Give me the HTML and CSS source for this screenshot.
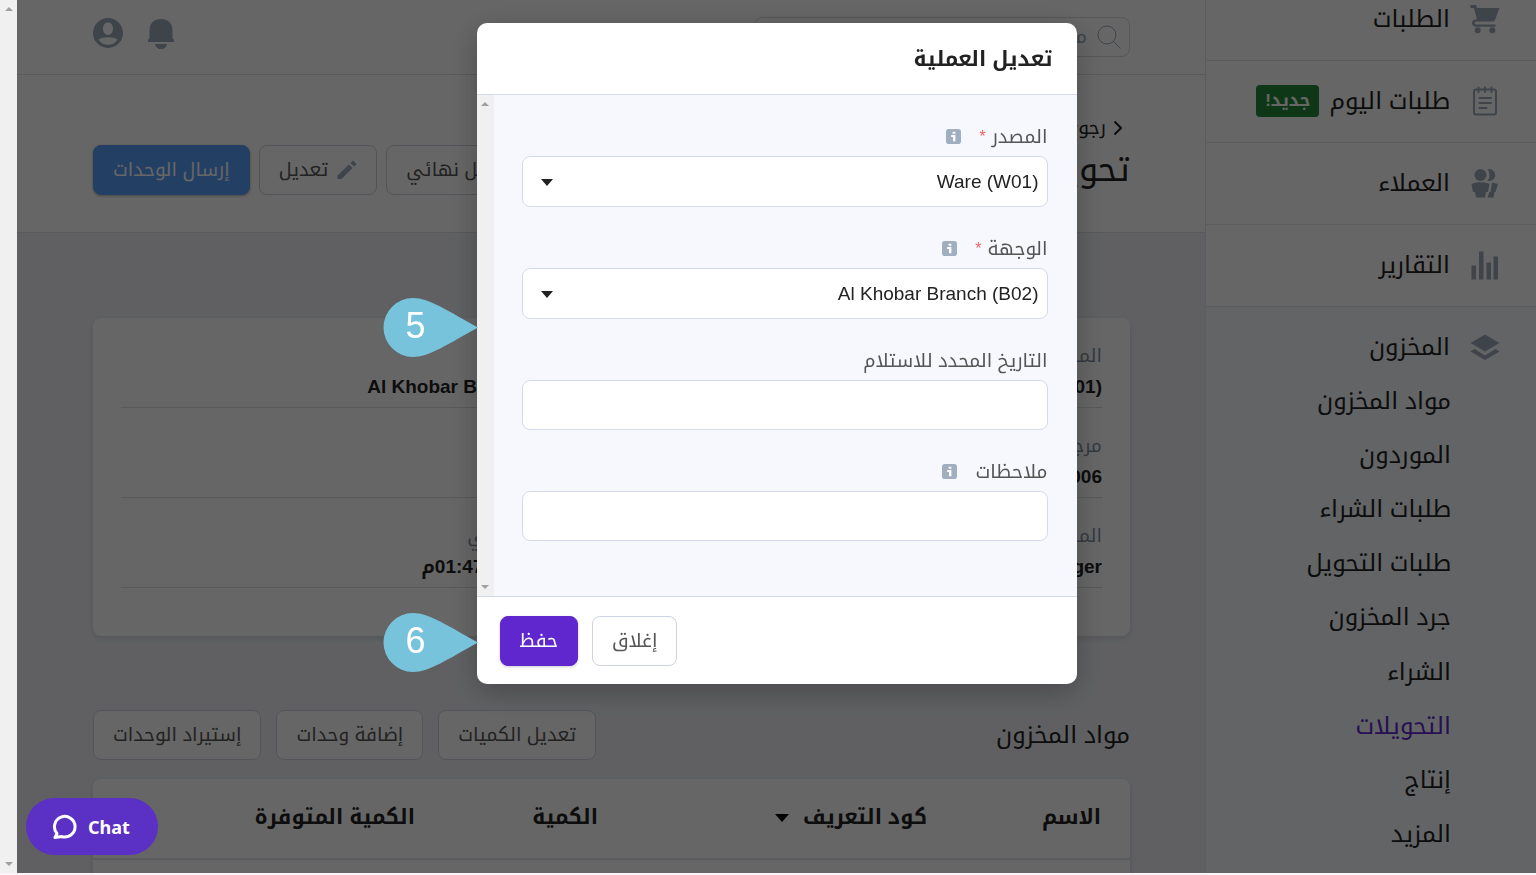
FILE: index.html
```html
<!DOCTYPE html>
<html lang="ar" dir="rtl">
<head>
<meta charset="utf-8">
<title>تعديل العملية</title>
<link rel="stylesheet" href="styles.css">
</head>
<body>
<div class="app">
  <nav class="sidebar">
    <a class="nav-item nav-first" href="#">
      <svg class="nav-icon" viewBox="0 0 30 30"><path d="M0.500 1H6l1.200 3H29.500L25 16a2.500 2.500 0 0 1-2.400 1.500H6.500c-2.600 0-2.600 3 0 3H25.500v2.300H6.500C1 22.800.5 16.500 5.200 15.500L7 15 3.800 4H.5z"/><circle cx="7.700" cy="26.300" r="3"/><circle cx="22.300" cy="26.300" r="3"/></svg>
      <span>الطلبات</span>
    </a>
    <a class="nav-item" href="#">
      <svg class="nav-icon line" viewBox="0 0 30 30"><rect x="4" y="3.500" width="22" height="25" rx="2"/><path d="M8.500 1.500v4.500M15 1.500v4.500M21.500 1.500v4.500M9.500 12h11.500M9.500 17h11.500M9.500 22h7"/></svg>
      <span>طلبات اليوم</span><span class="badge">جديد!</span>
    </a>
    <a class="nav-item" href="#">
      <svg class="nav-icon" viewBox="0 0 30 30"><circle cx="10.500" cy="7" r="6"/><path d="M17.500 1.300a6 6 0 1 1 0 11.400c2.600-3.400 2.600-8 0-11.400zM1.500 16C6 13.500 15 13.500 19.500 16L18 24h-2l-1 5.500H6L5 24H3zM22 14.500l6 1.500L25.500 24h-1L23.500 29.500h-6L19.500 24h1z"/></svg>
      <span>العملاء</span>
    </a>
    <a class="nav-item" href="#">
      <svg class="nav-icon" viewBox="0 0 30 30"><path d="M1.500 15.500H6v14H1.500zM9 1.500h4.500v28H9zM16.500 12.500H21v17h-4.500zM23.500 6.500H28v23h-4.500z"/></svg>
      <span>التقارير</span>
    </a>
    <div class="nav-group">
      <a class="nav-item nav-open" href="#">
        <svg class="nav-icon" viewBox="0 0 30 30"><path d="M15 2.500L29.500 11 15 19.500.5 11zM.5 19.500L4.500 17 15 23.500 25.500 17l4 2.500L15 28z"/></svg>
        <span>المخزون</span>
      </a>
      <div class="subnav">
        <a href="#">مواد المخزون</a>
        <a href="#">الموردون</a>
        <a href="#">طلبات الشراء</a>
        <a href="#">طلبات التحويل</a>
        <a href="#">جرد المخزون</a>
        <a href="#">الشراء</a>
        <a class="active" href="#">التحويلات</a>
        <a href="#">إنتاج</a>
        <a href="#">المزيد</a>
      </div>
    </div>
  </nav>

  <main class="main">
    <header class="topbar">
      <label class="search">
        <svg viewBox="0 0 24 24"><circle cx="10" cy="10" r="9"/><path d="M16.500 16.500l7 7"/></svg>
        <input type="search" placeholder="مكان البحث" aria-label="بحث">
      </label>
      <div class="top-icons">
        <svg class="bell" viewBox="0 0 28 32"><path d="M14 2C7 2 2.500 6.500 2.500 13v8L1 23v2h26v-2l-1.500-2v-8C25.500 6.500 21 2 14 2zM8 27h12c-1 7-11 7-12 0z"/></svg>
        <svg class="user" viewBox="0 0 30 30"><path fill-rule="evenodd" d="M15 0a15 15 0 1 0 0 30 15 15 0 0 0 0-30zM15 4.500c3 0 5 2.500 5 6s-2 6.500-5 6.500-5-3-5-6.500 2-6 5-6zM5.500 21.500c5-3 14-3 19 0-4 7-15 7-19 0z"/></svg>
      </div>
    </header>

    <section class="page-head">
      <div class="page-title">
        <a class="back" href="#"><svg viewBox="0 0 10 16"><path d="M1.500 1.500L8 8l-6.500 6.500"/></svg>رجوع</a>
        <h1>تحويل</h1>
      </div>
      <div class="actions">
        <button class="btn">حذف بشكل نهائي</button>
        <button class="btn"><svg viewBox="0 0 20 20"><path d="M.5 15.500L12 4.500l3.500 3.500L4.500 19H.5zM13.500 3L16 .5 19.500 4 17 6.500z"/></svg>تعديل</button>
        <button class="btn btn-blue">إرسال الوحدات</button>
      </div>
    </section>

    <div class="content">
      <dl class="card details">
        <div><dt>المصدر</dt><dd>Ware (W01)</dd></div>
        <div><dt>الوجهة</dt><dd>Al Khobar Branch (B02)</dd></div>
        <div><dt>مرجع</dt><dd>00006</dd></div>
        <div><dt>ملاحظات</dt><dd>-</dd></div>
        <div><dt>المنشئ</dt><dd>Manager</dd></div>
        <div><dt>التاريخ الفعلي</dt><dd><bdi>2022-5-17</bdi>، <bdi>01:47م</bdi></dd></div>
      </dl>

      <div class="section-head">
        <h2>مواد المخزون</h2>
        <div class="section-actions">
          <button class="btn">تعديل الكميات</button>
          <button class="btn">إضافة وحدات</button>
          <button class="btn">إستيراد الوحدات</button>
        </div>
      </div>

      <div class="card table-card">
        <table>
          <thead>
            <tr><th class="c-name">الاسم</th><th class="c-code">كود التعريف <svg viewBox="0 0 14 8"><path d="M0 0h14L7 8z"/></svg></th><th class="c-qty">الكمية</th><th>الكمية المتوفرة</th></tr>
          </thead>
        </table>
      </div>
    </div>
  </main>

  <div class="scrollbar" aria-hidden="true">
    <svg viewBox="0 0 8 4"><path d="M0 4h8L4 0z"/></svg>
    <svg viewBox="0 0 8 4"><path d="M0 0h8L4 4z"/></svg>
  </div>
</div>

<div class="overlay">
  <form class="modal" role="dialog" aria-labelledby="modal-title">
    <h3 class="modal-head" id="modal-title">تعديل العملية</h3>
    <div class="modal-body">
      <div class="fields">
        <div class="field">
          <label for="source">المصدر <span class="req">*</span><svg class="info" viewBox="0 0 16 16"><rect width="16" height="16" rx="3"/><path d="M7 3h3v2H7zM5.500 6.500H10V13H7.500V8.500h-2z"/></svg></label>
          <div class="select"><select id="source"><option>Ware (W01)</option></select><svg viewBox="0 0 12 7"><path d="M0 0h12L6 7z"/></svg></div>
        </div>
        <div class="field">
          <label for="dest">الوجهة <span class="req">*</span><svg class="info" viewBox="0 0 16 16"><rect width="16" height="16" rx="3"/><path d="M7 3h3v2H7zM5.500 6.500H10V13H7.500V8.500h-2z"/></svg></label>
          <div class="select"><select id="dest"><option>Al Khobar Branch (B02)</option></select><svg viewBox="0 0 12 7"><path d="M0 0h12L6 7z"/></svg></div>
        </div>
        <div class="field">
          <label for="date">التاريخ المحدد للاستلام</label>
          <input id="date" type="text">
        </div>
        <div class="field">
          <label for="notes">ملاحظات<svg class="info" viewBox="0 0 16 16"><rect width="16" height="16" rx="3"/><path d="M7 3h3v2H7zM5.500 6.500H10V13H7.500V8.500h-2z"/></svg></label>
          <input id="notes" type="text">
        </div>
      </div>
      <div class="scrollbar" aria-hidden="true">
        <svg viewBox="0 0 8 4"><path d="M0 4h8L4 0z"/></svg>
        <svg viewBox="0 0 8 4"><path d="M0 0h8L4 4z"/></svg>
      </div>
    </div>
    <div class="modal-foot">
      <button type="button" class="btn">إغلاق</button>
      <button type="button" class="btn btn-purple">حفظ</button>
    </div>
    <div class="pin pin-five"><svg viewBox="0 0 95 60"><path d="M30 0C46 0 65 13 95 29.500 65 46 46 59 30 59A29.500 29.500 0 0 1 30 0z"/></svg><span>5</span></div>
    <div class="pin pin-six"><svg viewBox="0 0 95 60"><path d="M30 0C46 0 65 13 95 29.500 65 46 46 59 30 59A29.500 29.500 0 0 1 30 0z"/></svg><span>6</span></div>
  </form>
</div>

<button class="chat" dir="ltr"><svg viewBox="0 0 26 26"><path d="M5 19.500A10.300 10.300 0 1 1 9.500 22.500L3 23.500z"/></svg>Chat</button>
</body>
</html>
```
FILE: styles.css
```css
* { box-sizing: border-box; }

body {
  margin: 0;
  height: 100vh;
  overflow: hidden;
  background: #fbf4f8;
  color: #222;
  font-family: "Liberation Sans", "Noto Kufi Arabic", "Noto Sans Arabic", "DejaVu Sans", sans-serif;
  font-size: 19px;
}

a { color: inherit; text-decoration: none; }
h1, h2, h3, dl, dd { margin: 0; font-weight: 400; }
button, input, select { font: inherit; }

.app {
  display: flex;
  height: calc(100vh - 2px);
  overflow: hidden;
}

/* Sidebar */
.sidebar {
  flex: 0 0 331px;
  display: flex;
  flex-direction: column;
  border-left: 1px solid #e4e6ee;
  background: #fff;
  font-size: 24px;
}
.nav-item {
  display: flex;
  align-items: center;
  flex: 0 0 82px;
  height: 82px;
  padding: 0 36px 2px 0;
  border-bottom: 1px solid #e4e6ee;
}
.nav-first { margin-top: -21px; }
.nav-icon {
  width: 30px;
  height: 30px;
  margin-left: 20px;
  fill: #9ea9ba;
}
.nav-icon.line { fill: none; stroke: #9ea9ba; stroke-width: 2; stroke-linecap: round; }
.badge {
  margin-right: 10px;
  padding: 0 9px;
  border-radius: 4px;
  background: #238b3c;
  color: #fff;
  font-size: 17px;
  font-weight: 700;
  line-height: 32px;
}
.nav-group {
  flex: 1;
  display: flex;
  flex-direction: column;
  padding-bottom: 12px;
  background: #f8fafe;
}
.nav-open { flex-basis: 67px; padding-top: 14px; border: 0; }
.subnav { flex: 1; display: flex; flex-direction: column; padding-right: 85px; }
.subnav a { flex: 1; display: flex; align-items: center; }
.subnav .active { color: #5f27cd; }

/* Main column */
.main { flex: 1; min-width: 0; background: #eff1f5; }
.topbar {
  display: flex;
  justify-content: space-between;
  height: 75px;
  padding: 17px 75px 0 76px;
  border-bottom: 1px solid #dde0e6;
  background: #fff;
}
.search {
  display: flex;
  align-items: center;
  width: 376px;
  height: 40px;
  padding: 0 8px;
  border: 1px solid #d5d9e2;
  border-radius: 8px;
}
.search svg { width: 24px; height: 24px; fill: none; stroke: #9ea9ba; stroke-width: 1; }
.search input { flex: 1; min-width: 0; margin-right: 10px; padding: 0; border: 0; outline: 0; background: none; }
.search input::placeholder { color: #9ea9ba; }
.top-icons { display: flex; gap: 23px; }
.top-icons svg { width: 30px; height: 32px; fill: #9eabba; }

.page-head {
  display: flex;
  justify-content: space-between;
  height: 158px;
  padding: 40px 75px 0 76px;
  border-bottom: 1px solid #dde0e6;
  background: #fff;
}
.back { display: flex; align-items: center; gap: 7px; height: 26px; padding-right: 7px; }
.back svg { width: 10px; height: 16px; fill: none; stroke: #222; stroke-width: 2; }
.page-title h1 { font-size: 34px; line-height: 56px; }
.actions { display: flex; align-items: flex-start; gap: 9px; padding-top: 30px; }

.btn {
  display: flex;
  align-items: center;
  justify-content: center;
  gap: 9px;
  height: 50px;
  padding: 0 19px;
  border: 1px solid #cdd3e0;
  border-radius: 8px;
  background: #fff;
  color: #555;
  font-size: 19px;
}
.btn svg { width: 20px; height: 20px; fill: #9ea9ba; }
.btn-blue { border-color: #579ff9; background: #579ff9; color: #fff; box-shadow: 0 1px 3px rgba(0, 0, 0, .3); }
.btn-purple { border-color: #5f27cd; background: #5f27cd; color: #fff; box-shadow: 0 1px 3px rgba(0, 0, 0, .2); }

.content { padding: 85px 75px 0 76px; }
.card { border-radius: 8px; background: #fff; box-shadow: 0 2px 6px rgba(0, 0, 0, .12); }
.details {
  display: grid;
  grid-template-columns: 1fr 1fr;
  column-gap: 60px;
  height: 318px;
  padding: 0 28px;
  align-content: start;
}
.details div {
  display: flex;
  flex-direction: column;
  justify-content: flex-end;
  height: 90px;
  padding-bottom: 6px;
  border-bottom: 1px solid #dcdfe8;
}
.details dt { color: #8492a6; line-height: 34px; }
.details dd { font-weight: 700; line-height: 28px; }

.section-head { display: flex; justify-content: space-between; align-items: center; margin-top: 74px; height: 50px; }
.section-head h2 { font-size: 24px; }
.section-actions { display: flex; gap: 15px; }

.table-card { height: 140px; margin-top: 19px; }
table { width: 100%; border-collapse: collapse; table-layout: fixed; }
th {
  height: 80px;
  padding: 0 29px 3px 0;
  border-bottom: 2px solid #e3e5f0;
  text-align: right;
  font-size: 21px;
  font-weight: 700;
}
.c-name { width: 174px; }
.c-code { width: 329px; }
.c-qty { width: 183px; }
th svg { width: 14px; height: 8px; margin-right: 8px; vertical-align: middle; }

.scrollbar {
  flex: 0 0 17px;
  display: flex;
  flex-direction: column;
  align-items: center;
  justify-content: space-between;
  padding: 7px 0;
  background: #f0f0f0;
}
.scrollbar svg { width: 8px; height: 4px; fill: #a0a0a0; }

/* Dialog */
.overlay {
  position: fixed;
  inset: 0 0 2px 17px;
  display: flex;
  align-items: flex-start;
  justify-content: center;
  padding-top: 23px;
  background: rgba(0, 0, 0, .6);
}
.modal {
  position: relative;
  width: 600px;
  border-radius: 10px;
  background: #fff;
  box-shadow: 0 8px 30px rgba(0, 0, 0, .25);
}
.modal-head {
  padding: 0 24px;
  border-bottom: 1px solid #d5daea;
  font-size: 21px;
  font-weight: 700;
  line-height: 71px;
}
.modal-body { display: flex; background: #f6f8fd; }
.fields { flex: 1; display: grid; gap: 29px; padding: 29px 29px 55px 28px; }
.field label { display: flex; align-items: center; height: 32px; padding-bottom: 7px; color: #555; }
.req { margin-right: 6px; color: #f0625e; font-size: 16px; }
.info { width: 15px; height: 15px; margin-right: 18px; fill: #a0aec0; }
.info path { fill: #fff; }
.field input, .field select {
  display: block;
  width: 100%;
  height: 50px;
  padding: 0 8px;
  border: 1px solid #d5daea;
  border-radius: 8px;
  background: #fff;
  color: #222;
}
.field select { appearance: none; height: 51px; }
.select { position: relative; }
.select svg { position: absolute; left: 19px; top: 23px; width: 12px; height: 7px; fill: #222; }
.modal-foot {
  display: flex;
  justify-content: flex-end;
  gap: 14px;
  padding: 19px 23px 18px;
  border-top: 1px solid #d5daea;
}

/* Step markers */
.pin { position: absolute; right: 599px; width: 95px; height: 60px; }
.pin svg { width: 95px; height: 60px; fill: #78c3dc; }
.pin span { position: absolute; left: 23px; top: 7px; color: #fff; font-size: 36px; line-height: 42px; }
.pin-five { top: 275px; }
.pin-six { top: 590px; }

.chat {
  position: fixed;
  left: 26px;
  bottom: 20px;
  display: flex;
  align-items: center;
  gap: 10px;
  height: 57px;
  padding: 0 28px 0 26px;
  border: 0;
  border-radius: 29px;
  background: #5a30c5;
  color: #fff;
  font: 700 18px "Noto Sans", sans-serif;
}
.chat svg { width: 26px; height: 26px; fill: none; stroke: #fff; stroke-width: 3; stroke-linejoin: round; }
```
